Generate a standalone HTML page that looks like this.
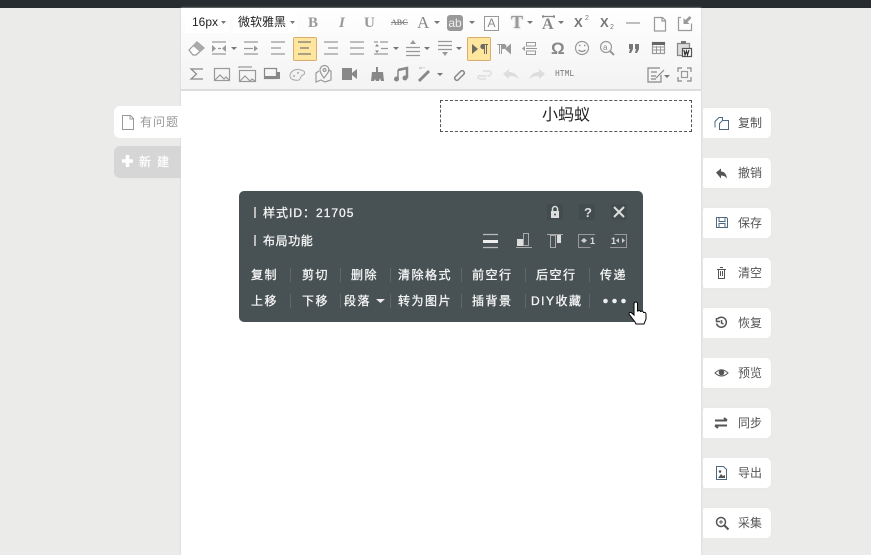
<!DOCTYPE html>
<html lang="zh"><head><meta charset="utf-8"><title>编辑器</title>
<style>
html,body{margin:0;padding:0}
body{width:871px;height:555px;overflow:hidden;position:relative;background:#ebebe9;font-family:"Liberation Sans","Noto Sans CJK SC",sans-serif;font-size:12px}
div,span{position:absolute;white-space:nowrap}
i{font-style:normal;font-family:"Noto Sans CJK TC",sans-serif}
#top{left:0;top:0;width:871px;height:8px;background:#262c2f}
#ed{left:181px;top:8px;width:520px;height:547px;background:#fff;box-shadow:0 0 2px #ccc}
#tb{left:181px;top:8px;width:520px;height:81px;background:linear-gradient(#fff,#f3f3f3);border-bottom:2px solid #ddd}
.sel{top:12px;height:21px;background:#fff;color:#222;line-height:21px}
#title{left:440px;top:100px;width:250px;height:30px;border:1px dashed #555;text-align:center;line-height:29px;font-size:16px;color:#222}
#pn{left:239px;top:191px;width:404px;height:131px;background:#485254;border-radius:5px}
.t{color:#f5f5f5;-webkit-text-stroke:.3px #f5f5f5;letter-spacing:1.5px;line-height:16px;height:16px;font-size:12px}
.s{width:1px;height:14px;background:#5e686a}
.b{left:703px;width:68px;height:30px;background:#fff;border-radius:2px 5px 5px 2px;box-shadow:0 0 1px #ddd}
.l{left:738px;color:#555;line-height:16px}
svg{position:absolute;left:0;top:0}
</style></head><body>
<div id="top"></div><div id="ed"></div><div id="tb"></div>
<div class="sel" style="left:185px;padding-left:7px;width:37px">16px</div>
<div class="sel" style="left:233px;padding-left:5px;width:59px">微软雅黑</div>
<div style="left:293px;top:37px;width:22px;height:22px;background:#ffe69f;border:1px solid #dcac6c;border-radius:2px"></div>
<div style="left:467px;top:37px;width:22px;height:22px;background:#ffe69f;border:1px solid #dcac6c;border-radius:2px"></div>
<div style="left:308px;top:15px;font:bold 15px 'Liberation Serif',serif;color:#999">B</div>
<div style="left:339px;top:15px;font:italic bold 15px 'Liberation Serif',serif;color:#999">I</div>
<div style="left:364px;top:15px;font:bold 15px 'Liberation Serif',serif;color:#999">U</div>
<div style="left:391px;top:18px;font:bold 8px 'Liberation Serif',serif;color:#888;text-decoration:line-through">ABC</div>
<div style="left:417px;top:13px;font:17px 'Liberation Serif',serif;color:#888">A</div>
<div style="left:447px;top:15px;width:16px;height:16px;background:#999;border-radius:3px;color:#eee;font-size:12px;line-height:16px;text-align:center">ab</div>
<div style="left:484px;top:16px;width:13px;height:13px;border:1px solid #999;color:#888;font-size:12px;line-height:13px;text-align:center">A</div>
<div style="left:511px;top:12px;font:bold 18px 'Liberation Serif',serif;color:#999;text-shadow:0 0 2px #bbb">T</div>
<div style="left:542px;top:16px;font:bold 16px 'Liberation Serif',serif;color:#888">A</div>
<div style="left:574px;top:15px;font:bold 13px 'Liberation Sans',sans-serif;color:#777">X</div>
<div style="left:585px;top:15px;font:7px 'Liberation Sans',sans-serif;color:#777">2</div>
<div style="left:600px;top:15px;font:bold 13px 'Liberation Sans',sans-serif;color:#777">X</div>
<div style="left:610px;top:24px;font:7px 'Liberation Sans',sans-serif;color:#777">2</div>
<div style="left:551px;top:39px;font:bold 17px 'Liberation Sans',sans-serif;color:#888">Ω</div>
<div style="left:555px;top:70px;font:8px 'Liberation Mono',monospace;color:#777;transform:scaleY(1.15)">HTML</div>
<svg width="871" height="555" viewBox="0 0 871 555" fill="none" stroke="#999" stroke-width="1.2">
<g fill="#777" stroke="none"><path d="M221 21h5l-2.500 3zM290 21h5l-2.500 3zM434 21h6l-3 3zM469 21h6l-3 3zM527 21h6l-3 3zM558 21h6l-3 3zM231 47h6l-3 3zM393 47h6l-3 3zM424 47h6l-3 3zM456 47h6l-3 3zM437 73h6l-3 3zM664 75h6l-3 3z"/></g>
<path d="M542 16.500h13M543 15v3M554 15v3" stroke="#888"/>
<path d="M626 23h14M654.500 17.500h8l3 3v10.500h-11zM662 18v3h3M681 17.500h-2.500v13h13v-7" stroke="#999"/><path d="M691.500 18l-4 4 2 2h-6v-6l2 2 4-4z" fill="#999" stroke="none"/>
<!-- row 2 -->
<path d="M189 50l8-8 7 6-8 7h-3z" fill="#fff" stroke="#999"/><path d="M193 46l7 6 4-4-7-6z" fill="#aaa" stroke="none"/>
<path d="M212 42h14M212 54h14M218 48.500h3" stroke="#999"/><path d="M212 45v7l4-3.500zM226 45v7l-4-3.500z" fill="#999" stroke="none"/>
<path d="M244 42h14M244 54h14M244 48.500h9"/><path d="M254 45.500v6l4-3z" fill="#999" stroke="none"/>
<path d="M271 42h14M271 48h10M271 54h14"/>
<path d="M298 42h13M300 48h9M298 54h13" stroke="#777"/>
<path d="M324 42h14M328 48h10M324 54h14M350 42h14M350 48h14M350 54h14"/>
<path d="M380 42h8M374 54h14M381 48.500h7M374 42h4"/><path d="M377 44l-2 2.500h4zM377 53l-2-2.500h4z" fill="#888" stroke="none"/>
<path d="M406 47.500h14M406 51.500h14M406 55.500h14"/><path d="M413 40l-3 4h6z" fill="#999" stroke="none"/>
<path d="M438 41.500h14M438 45.500h14M438 49.500h14"/><path d="M445 56l-3-4h6z" fill="#999" stroke="none"/>
<path d="M472 44l6 5-6 5zM482 44h6v1h-1v9h-1v-9h-1v9h-1v-5a2.500 2.500 0 01-2-5z" fill="#6b6b63" stroke="none"/>
<path d="M497 44h7a2.500 2.500 0 010 5h-2v5h-1v-9h-1v9h-1v-9h-2zM511 43.500v11l-6-5.500z" fill="#999" stroke="none"/>
<path d="M526.500 42.500h9v3.500h-9zM526 48.500h11M526.500 51h9v3.500h-9z" stroke-width="1"/><path d="M522 48.500l3-2.500v5z" fill="#999" stroke="none"/>
<circle cx="582" cy="48" r="6.500"/><path d="M578.500 50q3.500 3 7 0M579 45.500h1.500M584 45.500h1.500" stroke="#888"/>
<circle cx="606" cy="47" r="5.500"/><path d="M610 51l4 4" stroke-width="2"/><text x="603" y="50" font-size="8" fill="#888" stroke="none" font-family="Liberation Sans">a</text>
<path d="M629 44h4v5l-2 4h-2l1-4h-1zM635 44h4v5l-2 4h-2l1-4h-1z" fill="#777" stroke="none"/>
<rect x="652.500" y="42.500" width="12" height="11"/><path d="M652 42h13v3h-13z" fill="#666" stroke="none"/><path d="M652 50h13M652 47h13M656.500 46v8M660.500 46v8" stroke-width="1"/>
<path d="M677.500 43.500h12v12h-12z" fill="#ddd" stroke="#888"/><path d="M681 41h5v3h-5z" fill="#777" stroke="none"/><path d="M682.500 48.500h9v8h-9z" fill="#fff" stroke="#555"/><path d="M684 50l1 5 1.500-4 1 4 1.500-5" stroke="#333"/>
<!-- row 3 -->
<path d="M203 69h-12l5.500 5-5.500 5h12" stroke="#888"/>
<rect x="214.500" y="68.500" width="15" height="12"/><path d="M215 80l5-5 4 4 2-2 3 3"/>
<rect x="239.500" y="70.500" width="16" height="11"/><path d="M239 68v-1h13M240 81l5-5 5 5 2-2 3 2"/>
<rect x="264.500" y="68.500" width="12" height="10" stroke="#888"/><path d="M265 79h15v-7h-3v4h-12z" fill="#888" stroke="none"/>
<path d="M290 76c0-5 6-8 11-6 5 1 4 4 2 5-3 1-2 4-4 5-5 1-9-1-9-4z" fill="#f2f2f2" stroke="#aaa" stroke-width="1"/><circle cx="298" cy="73" r="1" fill="#aaa" stroke="none"/><circle cx="294" cy="76" r="1" fill="#aaa" stroke="none"/>
<path d="M324 78c-3-4-4-6-4-8a4.500 4.500 0 019 0c0 2-2 4-5 8z"/><circle cx="324.500" cy="70" r="1.500"/><path d="M319 71l-3 2v9l5-2 4 2 6-2v-9l-3-1"/>
<path d="M342 68h10v12h-10zM352 73l5-4v10l-5-4z" fill="#888" stroke="none"/>
<path d="M376 67h2v5h5l1 9h-3l-1-3-1 3h-3l-1-2-1 2h-3l1-9h4z" fill="#888" stroke="none"/>
<path d="M398 70l9-2v10" stroke="#888" stroke-width="2.500"/><path d="M398 70v9" stroke="#888" stroke-width="1.500"/><circle cx="396.500" cy="79" r="2.500" fill="#888" stroke="none"/><circle cx="405" cy="78" r="2.500" fill="#888" stroke="none"/>
<path d="M419 81l10-10" stroke="#888" stroke-width="3"/><path d="M419 68h3M424 67v1" stroke="#bbb"/>
<path d="M457 75l4-4a2.200 2.200 0 013 3l-3 3M459 73l-4 4a2.200 2.200 0 003 3l3-3" stroke="#888" stroke-width="1.500"/>
<path d="M483 71h6q3 1 2 3t-3 2M487 76h-6q-3-1-3 1t3 2h5" stroke="#ddd" stroke-width="1.500"/>
<path d="M503 74l6-5v3q7 0 10 7-3-3-10-3v3z" fill="#ddd" stroke="none"/><path d="M545 74l-6-5v3q-7 0-10 7 3-3 10-3v3z" fill="#ddd" stroke="none"/>
<path d="M661 75v7h-13v-14h12M651 72h6M651 76h5M651 79h5M656 78l8-8" stroke="#888"/>
<path d="M678 72v-4h4M687 68h4v4M691 77v4h-4M682 81h-4v-4" stroke="#888"/><rect x="681.500" y="71.500" width="6" height="6"/>
</svg>
<div class="b" style="left:114px;top:106px;width:67px;height:32px;border-radius:6px 0 0 6px;box-shadow:none"></div>
<div class="b" style="left:114px;top:146px;width:67px;height:32px;border-radius:6px 0 0 6px;background:#d6d6d6;box-shadow:none"></div>
<svg width="871" height="555" viewBox="0 0 871 555" fill="none">
<path d="M122.500 115.500h8l3 3v11h-11z" stroke="#999" fill="#fff"/><path d="M130 116v3h3" stroke="#999"/>
<path d="M127.500 155v12M122 161h11" stroke="#fff" stroke-width="3.500"/></svg>
<div style="left:140px;top:114px;color:#999;letter-spacing:1px;line-height:16px">有问题</div>
<div style="left:139px;top:154px;color:#fff;-webkit-text-stroke:.25px #fff;letter-spacing:6px;line-height:16px">新建</div>
<div id="title">小蚂蚁</div>
<div id="pn"></div>
<div class="s" style="left:254px;top:207px;width:2px;height:11px;background:#bbb"></div>
<div class="s" style="left:254px;top:235px;width:2px;height:11px;background:#bbb"></div>
<div class="t" style="left:263px;top:205px;letter-spacing:1px">样式ID<i>：</i>21705</div>
<div class="t" style="left:263px;top:233px;letter-spacing:.6px">布局功能</div>
<div class="t" style="left:251px;top:267px">复制</div><div class="t" style="left:302px;top:267px">剪切</div><div class="t" style="left:351px;top:267px">删除</div><div class="t" style="left:398px;top:267px">清除格式</div><div class="t" style="left:472px;top:267px">前空行</div><div class="t" style="left:536px;top:267px">后空行</div><div class="t" style="left:600px;top:267px">传递</div>
<div class="t" style="left:251px;top:293px">上移</div><div class="t" style="left:302px;top:293px">下移</div><div class="t" style="left:344px;top:293px">段落</div><div class="t" style="left:398px;top:293px">转为图片</div><div class="t" style="left:472px;top:293px">插背景</div><div class="t" style="left:531px;top:293px">DIY收藏</div>
<div class="s" style="left:290px;top:268px"></div><div class="s" style="left:340px;top:268px"></div><div class="s" style="left:390px;top:268px"></div><div class="s" style="left:461px;top:268px"></div><div class="s" style="left:525px;top:268px"></div><div class="s" style="left:589px;top:268px"></div>
<div class="s" style="left:290px;top:294px"></div><div class="s" style="left:340px;top:294px"></div><div class="s" style="left:390px;top:294px"></div><div class="s" style="left:461px;top:294px"></div><div class="s" style="left:525px;top:294px"></div><div class="s" style="left:589px;top:294px"></div>
<svg width="871" height="555" viewBox="0 0 871 555" fill="none">
<rect x="547" y="204" width="16" height="16" rx="2" fill="#424c4e"/><rect x="579" y="204" width="16" height="16" rx="2" fill="#424c4e"/><rect x="611" y="204" width="16" height="16" rx="2" fill="#424c4e"/>
<path d="M551 211h8v7h-8z" fill="#ddd"/><path d="M552.500 211v-2a2.500 2.500 0 015 0v2" stroke="#ddd" stroke-width="1.500"/><circle cx="555" cy="214.500" r="1" fill="#424c4e"/>
<text x="584" y="217" font-family="Liberation Sans" font-weight="bold" font-size="13" fill="#ddd">?</text>
<path d="M614 207l10 10M624 207l-10 10" stroke="#ddd" stroke-width="2"/>
<path d="M483 234.500h15M483 247.500h15" stroke="#bbb" stroke-width="1.200"/><path d="M483 240h15v3h-15z" fill="#eee"/>
<path d="M516 247.500h16" stroke="#aaa"/><path d="M517 239h6v7h-6z" fill="#ddd"/><rect x="523.500" y="233.500" width="5" height="12" stroke="#aaa"/>
<path d="M547 234.500h16" stroke="#aaa"/><path d="M557 235h4v8h-4z" fill="#ddd"/><rect x="550.500" y="235.500" width="5" height="12" stroke="#aaa"/>
<path d="M595 234.500h-16.500v13h12M610 247.500h16.500v-13h-12" stroke="#999"/>
<path d="M581 240.500l3-2.500v5zM587 240.500l-3-2.500v5zM616 240.500l3-2.500v5zM625 240.500l-3-2.500v5z" fill="#ccc"/>
<text x="590" y="244" font-size="9" font-family="Liberation Sans" font-weight="bold" fill="#ddd">1</text><text x="611" y="244" font-size="9" font-family="Liberation Sans" font-weight="bold" fill="#ddd">1</text>
<path d="M376 299h9l-4.500 4z" fill="#eee"/>
<circle cx="605.500" cy="301" r="2.300" fill="#eee"/><circle cx="614.500" cy="301" r="2.300" fill="#eee"/><circle cx="623.500" cy="301" r="2.300" fill="#eee"/>
<path d="M634 304q0-2 2-2q1.500 0 1.500 2v7q2.500-1 3 .5q2.500-1 3 1q2.500-.5 2.500 1.500v5l-2 5h-8l-1-2-3-4-3-4q0-2 2-1.500l3 2.500z" fill="#fff" stroke="#000"/>
</svg>
<div class="b" style="top:108px"></div><div class="b" style="top:158px"></div><div class="b" style="top:208px"></div><div class="b" style="top:258px"></div><div class="b" style="top:308px"></div><div class="b" style="top:358px"></div><div class="b" style="top:408px"></div><div class="b" style="top:458px"></div><div class="b" style="top:508px"></div>
<svg width="871" height="555" viewBox="0 0 871 555" fill="none" stroke="#555">
<path d="M715 127.500v-6l4-4h3.500v3M719.500 129.500v-6l3-3h6v9z" stroke="#4d6880"/>
<path d="M716 172.500l5-4v3q5 0 6 7-2-3-6-3v3z" fill="#555" stroke="none"/>
<path d="M716.500 217.500h10l1 1v9h-11zM719 217.500v4h6v-4M719 227v-3.500h6v3.500" stroke="#4d6880"/>
<path d="M717 269.500h9M718.500 270v8.500h6V270M720 267.500h3M720.500 271v5M722.500 271v5"/>
<path d="M717.500 319a5 5 0 11-1 4.500M716.500 318v3.500h3.500M721.500 320v3l2 1" stroke-width="1.500"/>
<path d="M715 373q6.500-6.500 13 0-6.500 6-13 0z" fill="#fff"/><circle cx="721.500" cy="372.500" r="2.800" fill="#555" stroke="none"/>
<path d="M715 420.500h12M724 418l3 2.500M715 425.500h12M718 428l-3-2.500" stroke-width="2"/>
<path d="M716.500 466.500h7l3 3v10h-10z" stroke="#4d6880"/><path d="M718 478l3-4 2 2 2-1v3z" fill="#555" stroke="none"/><circle cx="720" cy="471.500" r="1.300" fill="#555" stroke="none"/>
<circle cx="721" cy="522" r="4.500" stroke-width="1.500"/><path d="M724.500 525.500l4 4" stroke-width="2"/><path d="M719 522h4M721 520v4"/>
</svg>
<div class="l" style="top:115px">复制</div><div class="l" style="top:165px">撤销</div><div class="l" style="top:215px">保存</div><div class="l" style="top:265px">清空</div><div class="l" style="top:315px">恢复</div><div class="l" style="top:365px">预览</div><div class="l" style="top:415px">同步</div><div class="l" style="top:465px">导出</div><div class="l" style="top:515px">采集</div>
</body></html>
